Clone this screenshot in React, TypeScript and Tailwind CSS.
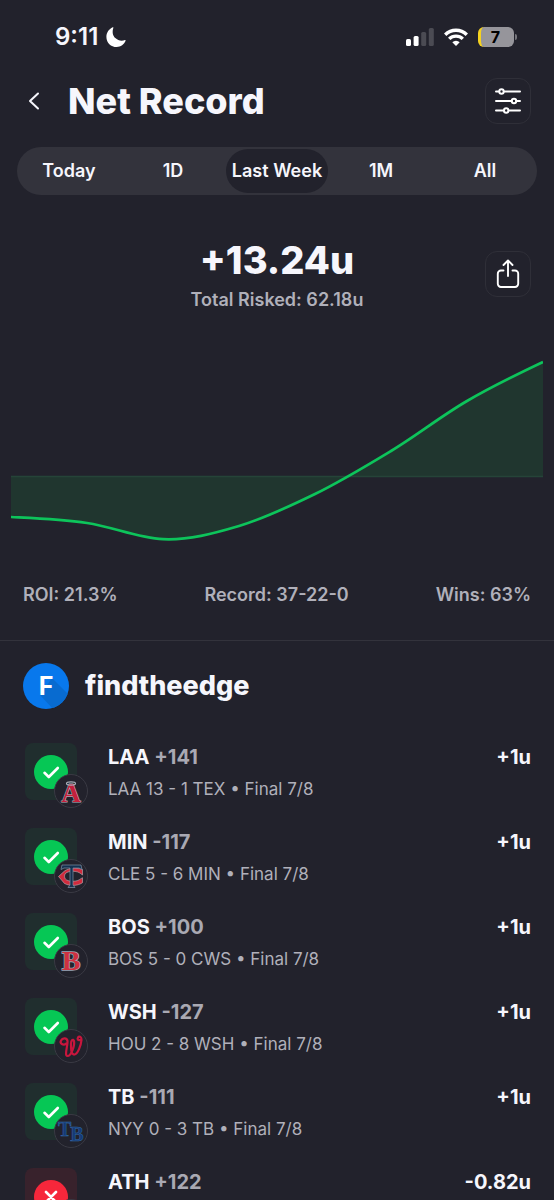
import React, { useState } from "react";
import { clsx } from "clsx";

type Team = "LAA" | "MIN" | "BOS" | "WSH" | "TB" | "ATH";

type Pick = {
  team: Team;
  odds: string;
  result?: string;
  units: string;
  won: boolean;
};

const RANGES = ["Today", "1D", "Last Week", "1M", "All"];

const PICKS: Pick[] = [
  { team: "LAA", odds: "+141", result: "LAA 13 - 1 TEX • Final 7/8", units: "+1u", won: true },
  { team: "MIN", odds: "-117", result: "CLE 5 - 6 MIN • Final 7/8", units: "+1u", won: true },
  { team: "BOS", odds: "+100", result: "BOS 5 - 0 CWS • Final 7/8", units: "+1u", won: true },
  { team: "WSH", odds: "-127", result: "HOU 2 - 8 WSH • Final 7/8", units: "+1u", won: true },
  { team: "TB", odds: "-111", result: "NYY 0 - 3 TB • Final 7/8", units: "+1u", won: true },
  { team: "ATH", odds: "+122", units: "-0.82u", won: false },
];

function StatusBar() {
  return (
    <div className="flex h-[74px] items-center justify-between pr-[37px] pl-[55px]">
      <div className="flex items-center gap-2">
        <span className="text-2xl font-semibold">9:11</span>
        <svg width="20" height="20" viewBox="0 0 20 20" fill="#fff" aria-label="Do not disturb">
          <path d="M7.4.7C5.9 5 6.800 8.700 9.300 11.100c2.600 2.500 6.300 3.200 9.600 2 .5-.2.900.2.700.700C18.200 17.500 14.700 20 10.700 20 4.900 20 .4 15.500.4 9.900.4 5.700 2.900 2 6.700.3c.5-.2.900 0 .7.400Z" />
        </svg>
      </div>
      <div className="flex items-center gap-[10px]">
        <svg width="28" height="18" viewBox="0 0 28 18" aria-label="Signal">
          <rect x="0" y="11" width="5" height="7" rx="1.500" fill="#fff" />
          <rect x="7.600" y="8" width="5" height="10" rx="1.500" fill="#fff" />
          <rect x="15.200" y="4" width="5" height="14" rx="1.500" fill="#4b4b53" />
          <rect x="22.800" y="0" width="5" height="18" rx="1.500" fill="#4b4b53" />
        </svg>
        <svg width="24" height="18" viewBox="0 0 24 18" fill="none" stroke="#fff" strokeWidth="3.400" aria-label="Wi-Fi">
          <path d="M1.200 6.700a15.500 15.500 0 0 1 21.600 0" />
          <path d="M5.200 10.900a9.700 9.700 0 0 1 13.600 0" />
          <path d="M12 17.900 8.300 14.200a5.200 5.200 0 0 1 7.400 0Z" fill="#fff" stroke="none" />
        </svg>
        <div className="flex items-center gap-px">
          <div className="flex h-5 w-9 items-center justify-center overflow-hidden rounded-md border-l-[3px] border-[#f5d21f] bg-[#96959b] pr-1 text-base font-bold text-black">
            7
          </div>
          <div className="h-[6px] w-[2px] rounded-r-full bg-[#77767d]" />
        </div>
      </div>
    </div>
  );
}

function IconButton({ label, children }: { label: string; children: React.ReactNode }) {
  return (
    <button
      type="button"
      aria-label={label}
      className="flex size-[46px] shrink-0 items-center justify-center rounded-xl border border-[#2f2f38]"
    >
      {children}
    </button>
  );
}

function Header() {
  return (
    <header className="flex items-center pt-1 pr-[23px] pl-6">
      <button type="button" aria-label="Back" className="flex h-10 w-5 items-center justify-center">
        <svg width="12" height="18" viewBox="0 0 12 18" fill="none" stroke="#f6f6fc" strokeWidth="2" strokeLinecap="round" strokeLinejoin="round">
          <path d="M10 1.500 2 9l8 7.500" />
        </svg>
      </button>
      <h1 className="ml-6 grow text-4xl leading-10 font-extrabold">Net Record</h1>
      <IconButton label="Filters">
        <svg width="28" height="28" viewBox="0 0 28 28" fill="#22222c" stroke="#fff" strokeWidth="2" strokeLinecap="round">
          <path d="M2 4.500h24M2 14h24M2 23.500h24" />
          <circle cx="7.500" cy="4.500" r="2.200" />
          <circle cx="20" cy="14" r="2.200" />
          <circle cx="12.200" cy="23.500" r="2.200" />
        </svg>
      </IconButton>
    </header>
  );
}

function RangeTabs() {
  const [active, setActive] = useState("Last Week");
  return (
    <nav className="mx-[17px] mt-[23px] grid h-12 grid-cols-5 items-center rounded-full bg-[#33333c]">
      {RANGES.map((range) => (
        <button
          key={range}
          type="button"
          aria-pressed={range === active}
          onClick={() => setActive(range)}
          className={clsx(
            "mx-px h-11 rounded-full text-lg font-semibold whitespace-nowrap",
            range === active && "bg-[#22222c]",
          )}
        >
          {range}
        </button>
      ))}
    </nav>
  );
}

function Summary() {
  return (
    <section className="mt-[41px] grid grid-cols-[1fr_auto_1fr] items-center pr-[23px]">
      <div className="col-start-2 pl-[23px] text-center">
        <p className="text-[38px] leading-12 font-extrabold">+13.24u</p>
        <p className="mt-1 text-lg leading-6 font-semibold text-[#b0b0ba]">Total Risked: 62.18u</p>
      </div>
      <div className="flex justify-end">
        <IconButton label="Share">
          <svg width="24" height="30" viewBox="0 0 24 30" fill="none" stroke="#fff" strokeWidth="1.900" strokeLinecap="round" strokeLinejoin="round">
            <path d="M7.500 11.500H5A3.200 3.200 0 0 0 1.800 14.700v10A3.200 3.200 0 0 0 5 28h14a3.200 3.200 0 0 0 3.200-3.300v-10a3.200 3.200 0 0 0-3.200-3.200h-2.500" />
            <path d="M12 17V2M7.500 6 12 1.500 16.500 6" />
          </svg>
        </IconButton>
      </div>
    </section>
  );
}

const CURVE =
  "M0 157C25.300 158.300 50.700 159.300 76 163C101.300 166.700 126.700 178 152 179.200C177.300 180.400 202.700 173.500 228 166C253.300 158.500 278.700 146.300 304 134C329.300 121.700 354.700 106.300 380 91C405.300 75.700 430.700 55.700 456 41C481.300 26.300 506.700 14 532 2";

function RecordChart() {
  return (
    <svg viewBox="0 0 532 182" className="mt-12 block w-full px-[11px]" aria-label="Net units over the last week">
      <path d={`${CURVE}V116.500H0Z`} fill="#20362f" />
      <path d="M0 116.500H532" stroke="#254438" strokeWidth="1.500" />
      <path d={CURVE} fill="none" stroke="#0dc45b" strokeWidth="2.700" />
    </svg>
  );
}

function Stats() {
  return (
    <section className="mt-[41px] flex justify-between border-b border-[#33333c] px-[23px] pb-[33px] text-lg leading-6 font-semibold text-[#b0b0ba]">
      <span>ROI: 21.3%</span>
      <span>Record: 37-22-0</span>
      <span>Wins: 63%</span>
    </section>
  );
}

function Logo({ team }: { team: Team }) {
  switch (team) {
    case "LAA":
      return (
        <g>
          <text x="17" y="28" textAnchor="middle" fontFamily="Liberation Serif, serif" fontWeight="700" fontSize="27" fill="#c4203c" stroke="#a9b1bb" strokeWidth="1.200" paintOrder="stroke">A</text>
          <ellipse cx="17" cy="9.500" rx="4.500" ry="1.600" fill="none" stroke="#a9b1bb" strokeWidth="1.200" />
        </g>
      );
    case "MIN":
      return (
        <g>
          <path d="M28.500 10.500v5.500l-2-1.500c-3-2.500-10-3-14-.8-2.600 1.500-2.600 5.600 0 7.200 4 2.200 11 1.700 14-1l2-1.200v5c-5 3.500-13 3.500-18 .8L4.500 17.500l6-5.500c5-3.500 13-4 18-1.500Z" fill="#d02b3d" stroke="#c9ccd3" strokeWidth=".5" />
          <path d="M8 6h19l1 4.500-3-1.500h-6V26l2 2.500h-7l2-2.500V9h-6L7 10.500Z" fill="#15304f" stroke="#7f93a8" strokeWidth=".7" />
        </g>
      );
    case "BOS":
      return (
        <text x="17" y="26" textAnchor="middle" fontFamily="Liberation Serif, serif" fontWeight="700" fontSize="28" fill="#cf3140" stroke="#9aa6b8" strokeWidth="1.600" paintOrder="stroke">B</text>
      );
    case "WSH":
      return (
        <path
          d="M12.500 14.500C9 17 5.500 14.500 7 11.500C8.500 8.500 13 8.500 13.500 12C14 16 10 27 13.500 27C17 27 21 17 20 12C19 9.500 17 11 17 15C17 20 17 26 20.500 25.500C24 25 27 16 27.500 11C27.700 8 25.500 6.500 24 8.500C23 10 24 11.500 26 11"
          fill="none"
          stroke="#c8163d"
          strokeWidth="2.200"
          strokeLinecap="round"
        />
      );
    case "TB":
      return (
        <text x="4" y="22" fontFamily="Liberation Serif, serif" fontWeight="700" fontSize="20" fill="#153a75" stroke="#356aa8" strokeWidth=".5">
          T<tspan dx="-1" dy="5">B</tspan>
        </text>
      );
    default:
      return null;
  }
}

function TeamBadge({ team }: { team: Team }) {
  return (
    <svg className="absolute top-[31px] left-[29px]" width="34" height="34" viewBox="0 0 34 34" aria-hidden="true">
      <circle cx="17" cy="17" r="16.500" fill="#22222c" stroke="#3a3a44" />
      <Logo team={team} />
    </svg>
  );
}

function ResultTile({ pick }: { pick: Pick }) {
  return (
    <div
      className={clsx(
        "relative flex h-[57px] w-[52px] shrink-0 items-center justify-center rounded-lg",
        pick.won ? "bg-[#202e2e]" : "bg-[#38222c]",
      )}
    >
      <div
        className={clsx(
          "flex size-[34px] items-center justify-center rounded-full",
          pick.won ? "bg-[#06c755]" : "bg-[#f6273b]",
        )}
      >
        <svg width="18" height="18" viewBox="0 0 18 18" fill="none" stroke="#fff" strokeWidth="2.600" strokeLinecap="round" strokeLinejoin="round" aria-label={pick.won ? "Won" : "Lost"}>
          {pick.won ? <path d="m2.500 9.800 4.300 4.200 9-9" /> : <path d="m4 4 10 10M14 4 4 14" />}
        </svg>
      </div>
      <TeamBadge team={pick.team} />
    </div>
  );
}

function PickRow({ pick }: { pick: Pick }) {
  return (
    <li className="flex h-[85px] items-start pr-[23px] pl-[25px]">
      <ResultTile pick={pick} />
      <div className="ml-[31px] grow">
        <p className="text-xl leading-7 font-bold">
          {pick.team} <span className="text-[#a9a9b3]">{pick.odds}</span>
        </p>
        {pick.result && <p className="mt-1 text-[17px] leading-7 text-[#b0b0ba]">{pick.result}</p>}
      </div>
      <span className="text-xl leading-7 font-bold">{pick.units}</span>
    </li>
  );
}

export default function App() {
  return (
    <main className="h-screen overflow-hidden bg-[#22222c] font-['Inter',sans-serif] text-[#f6f6fc]">
      <StatusBar />
      <Header />
      <RangeTabs />
      <Summary />
      <RecordChart />
      <Stats />
      <section>
        <div className="flex items-center gap-4 px-[23px] pt-[22px] pb-[34px]">
          <div className="flex size-[46px] items-center justify-center overflow-hidden rounded-full bg-[#0878ec]">
            <svg width="46" height="46" viewBox="0 0 46 46" aria-hidden="true">
              <path d="M29 15 46 32V46H30L17 32Z" fill="#086bd0" />
              <text x="23" y="32" textAnchor="middle" fontSize="25" fontWeight="700" fill="#fff">F</text>
            </svg>
          </div>
          <h2 className="text-[27px] leading-10 font-extrabold">findtheedge</h2>
        </div>
        <ul>
          {PICKS.map((pick) => (
            <PickRow key={pick.team} pick={pick} />
          ))}
        </ul>
      </section>
    </main>
  );
}
